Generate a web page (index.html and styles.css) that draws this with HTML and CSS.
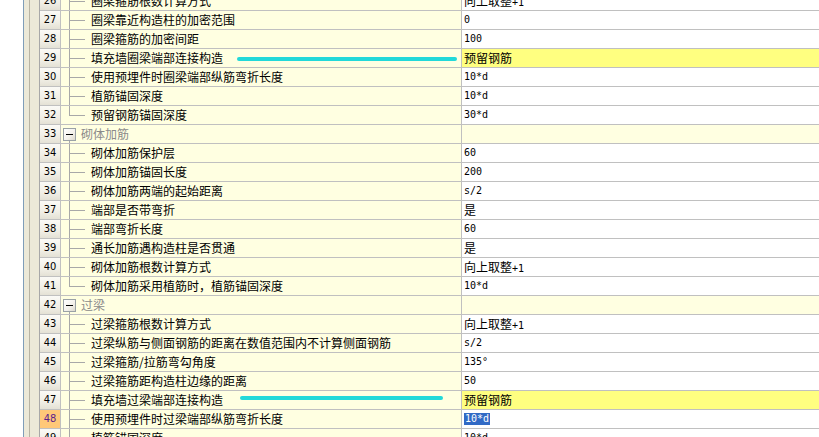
FILE: index.html
```html
<!DOCTYPE html>
<html lang="zh-CN">
<head>
<meta charset="utf-8">
<title>属性编辑</title>
<link rel="stylesheet" href="styles.css">
</head>
<body>
<div class="page">
  <div class="gutter">
    <div class="g-white"></div>
    <div class="g-line"></div>
    <div class="g-pad"></div>
    <div class="g-line2"></div>
    <div class="g-pad2"></div>
  </div>
  <div class="grid">
    <div class="rows">
      <div class="row"><div class="num">26</div><div class="name child">圈梁箍筋根数计算方式</div><div class="val"><span class="cj">向上取整</span>+1</div></div>
      <div class="row"><div class="num">27</div><div class="name child">圈梁靠近构造柱的加密范围</div><div class="val">0</div></div>
      <div class="row"><div class="num">28</div><div class="name child">圈梁箍筋的加密间距</div><div class="val">100</div></div>
      <div class="row"><div class="num">29</div><div class="name child">填充墙圈梁端部连接构造</div><div class="val hl"><span class="cj">预留钢筋</span></div></div>
      <div class="row"><div class="num">30</div><div class="name child">使用预埋件时圈梁端部纵筋弯折长度</div><div class="val">10*d</div></div>
      <div class="row"><div class="num">31</div><div class="name child">植筋锚固深度</div><div class="val">10*d</div></div>
      <div class="row"><div class="num">32</div><div class="name child last">预留钢筋锚固深度</div><div class="val">30*d</div></div>
      <div class="row"><div class="num">33</div><div class="name group"><span class="box"></span><span class="gtext">砌体加筋</span></div><div class="val gval"></div></div>
      <div class="row"><div class="num">34</div><div class="name child">砌体加筋保护层</div><div class="val">60</div></div>
      <div class="row"><div class="num">35</div><div class="name child">砌体加筋锚固长度</div><div class="val">200</div></div>
      <div class="row"><div class="num">36</div><div class="name child">砌体加筋两端的起始距离</div><div class="val">s/2</div></div>
      <div class="row"><div class="num">37</div><div class="name child">端部是否带弯折</div><div class="val"><span class="cj">是</span></div></div>
      <div class="row"><div class="num">38</div><div class="name child">端部弯折长度</div><div class="val">60</div></div>
      <div class="row"><div class="num">39</div><div class="name child">通长加筋遇构造柱是否贯通</div><div class="val"><span class="cj">是</span></div></div>
      <div class="row"><div class="num">40</div><div class="name child">砌体加筋根数计算方式</div><div class="val"><span class="cj">向上取整</span>+1</div></div>
      <div class="row"><div class="num">41</div><div class="name child last">砌体加筋采用植筋时，植筋锚固深度</div><div class="val">10*d</div></div>
      <div class="row"><div class="num">42</div><div class="name group"><span class="box"></span><span class="gtext">过梁</span></div><div class="val gval"></div></div>
      <div class="row"><div class="num">43</div><div class="name child">过梁箍筋根数计算方式</div><div class="val"><span class="cj">向上取整</span>+1</div></div>
      <div class="row"><div class="num">44</div><div class="name child">过梁纵筋与侧面钢筋的距离在数值范围内不计算侧面钢筋</div><div class="val">s/2</div></div>
      <div class="row"><div class="num">45</div><div class="name child">过梁箍筋/拉筋弯勾角度</div><div class="val">135°</div></div>
      <div class="row"><div class="num">46</div><div class="name child">过梁箍筋距构造柱边缘的距离</div><div class="val">50</div></div>
      <div class="row"><div class="num">47</div><div class="name child">填充墙过梁端部连接构造</div><div class="val hl"><span class="cj">预留钢筋</span></div></div>
      <div class="row"><div class="num cur">48</div><div class="name child">使用预埋件时过梁端部纵筋弯折长度</div><div class="val"><span class="sel">10*d</span></div></div>
      <div class="row"><div class="num">49</div><div class="name child">植筋锚固深度</div><div class="val">10*d</div></div>
    </div>
    <div class="mark mark1"></div>
    <div class="mark mark2"></div>
  </div>
</div>
</body>
</html>
```
FILE: styles.css
```css
html, body {
  margin: 0;
  padding: 0;
  background: #ffffff;
}
.page {
  display: flex;
  width: 819px;
  height: 437px;
  overflow: hidden;
}
.gutter {
  display: flex;
  flex: none;
  height: 100%;
}
.g-white { width: 23px; background: #ffffff; }
.g-line { width: 1px; background: #7f9db9; }
.g-pad { width: 5px; background: #ece9d8; }
.g-line2 { width: 1px; background: #b8b4a4; }
.g-pad2 { width: 9px; background: #ece9d8; }

.grid {
  position: relative;
  flex: 1;
  height: 100%;
  overflow: hidden;
  border-left: 1px solid #a8a8a8;
}
.rows {
  margin-top: -8px;
}
.row {
  display: grid;
  grid-template-columns: 21px 401px 1fr;
  height: 19px;
}
.row > div {
  box-sizing: border-box;
  height: 19px;
  border-bottom: 1px solid #c0c0c0;
}
.num {
  border-right: 1px solid #c0c0c0;
  background: linear-gradient(180deg, #fbfaf6 0%, #f1efe6 60%, #e4e1d5 100%);
  font-family: "DejaVu Sans Condensed", "Liberation Sans", sans-serif;
  font-size: 11px;
  line-height: 18px;
  text-align: center;
  color: #000000;
}
.num.cur {
  background: #ffc878;
  color: #5b1e8c;
}
.name {
  border-right: 1px solid #c0c0c0;
  background-color: #ffffe1;
  font-family: "Noto Sans CJK SC", sans-serif;
  font-size: 12px;
  line-height: 18px;
  color: #000000;
  white-space: nowrap;
  overflow: hidden;
}
.name.child {
  padding-left: 30px;
  background-image:
    linear-gradient(#a8a8a8, #a8a8a8),
    linear-gradient(#a8a8a8, #a8a8a8);
  background-size: 1px 100%, 15px 1px;
  background-position: 8px 0, 9px 9px;
  background-repeat: no-repeat;
}
.name.child.last {
  background-size: 1px 10px, 15px 1px;
}
.name.group {
  display: flex;
  align-items: center;
  background-image: linear-gradient(#a8a8a8, #a8a8a8);
  background-size: 1px 4px;
  background-position: 8px 15px;
  background-repeat: no-repeat;
}
.box {
  box-sizing: border-box;
  width: 13px;
  height: 13px;
  margin-left: 2px;
  margin-top: 1px;
  border: 1px solid #9aa2a6;
  background:
    linear-gradient(#000000, #000000) center / 7px 1px no-repeat,
    linear-gradient(135deg, #ffffff 0%, #f2f0ea 60%, #dcd8cc 100%);
}
.gtext {
  margin-left: 5px;
  color: #8a8a8a;
}
.val {
  padding-left: 2px;
  background: #ffffff;
  font-family: "DejaVu Sans Mono", "Noto Sans CJK SC", monospace;
  font-size: 10px;
  line-height: 18px;
  color: #000000;
  white-space: nowrap;
}
.cj {
  font-family: "Noto Sans CJK SC", sans-serif;
  font-size: 12px;
}
.val.hl {
  background: #ffff80;
}
.val.gval {
  background: #ffffe1;
}
.sel {
  display: inline-block;
  line-height: 12px;
  padding: 0 1px;
  background: #316ac5;
  color: #ffffff;
}
.mark {
  position: absolute;
  height: 4px;
  border-radius: 2px;
  background: #22d9d9;
}
.mark1 {
  left: 197px;
  top: 57px;
  width: 220px;
}
.mark2 {
  left: 200px;
  top: 396px;
  width: 203px;
}
```
